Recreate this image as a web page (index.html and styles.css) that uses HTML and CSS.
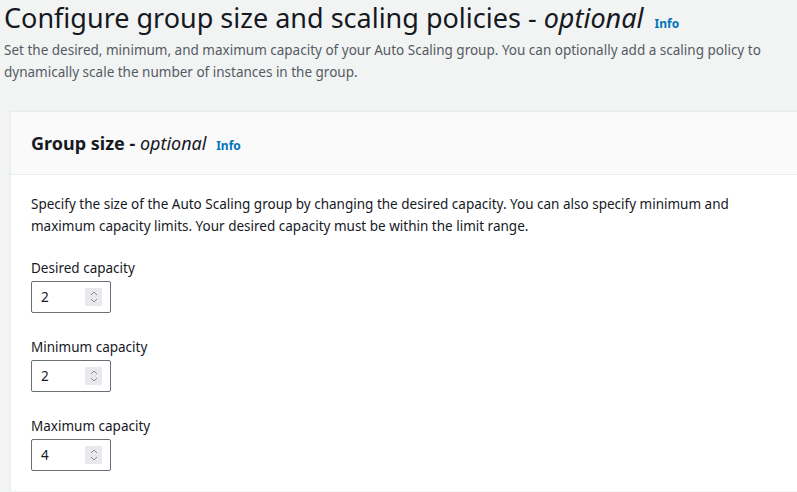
FILE: index.html
```html
<!DOCTYPE html>
<html lang="en">
<head>
    <meta charset="UTF-8">
    <meta name="viewport" content="width=device-width, initial-scale=1.0">
    <title>Configure group size and scaling policies</title>
    <link rel="stylesheet" href="styles.css">
</head>
<body>
    <div class="page">
        <h1 class="page-title">Configure group size and scaling policies - <i>optional</i> <a href="javascript:;" class="info">Info</a></h1>
        <p class="page-desc">Set the desired, minimum, and maximum capacity of your Auto Scaling group. You can optionally add a scaling policy to dynamically scale the number of instances in the group.</p>

        <div class="card">
            <div class="card-header">
                <h2 class="card-title">Group size - <i>optional</i> <a href="javascript:;" class="info">Info</a></h2>
            </div>
            <div class="card-body">
                <p class="card-desc">Specify the size of the Auto Scaling group by changing the desired capacity. You can also specify minimum and maximum capacity limits. Your desired capacity must be within the limit range.</p>

                <div class="field">
                    <label class="field-label">Desired capacity</label>
                    <div class="num-input">
                        <span class="num-value">2</span>
                        <span class="spinner">
                            <svg width="10" height="14" viewBox="0 0 10 14"><path d="M2 5 L5 2 L8 5 M2 9 L5 12 L8 9" fill="none" stroke="#8a8a92" stroke-width="1"/></svg>
                        </span>
                    </div>
                </div>

                <div class="field">
                    <label class="field-label">Minimum capacity</label>
                    <div class="num-input">
                        <span class="num-value">2</span>
                        <span class="spinner">
                            <svg width="10" height="14" viewBox="0 0 10 14"><path d="M2 5 L5 2 L8 5 M2 9 L5 12 L8 9" fill="none" stroke="#8a8a92" stroke-width="1"/></svg>
                        </span>
                    </div>
                </div>

                <div class="field">
                    <label class="field-label">Maximum capacity</label>
                    <div class="num-input">
                        <span class="num-value">4</span>
                        <span class="spinner">
                            <svg width="10" height="14" viewBox="0 0 10 14"><path d="M2 5 L5 2 L8 5 M2 9 L5 12 L8 9" fill="none" stroke="#8a8a92" stroke-width="1"/></svg>
                        </span>
                    </div>
                </div>
            </div>
        </div>
    </div>
</body>
</html>
```

FILE: styles.css
```css
*{margin: 0; padding: 0; box-sizing: border-box;}
body{background: #f2f3f3; font-family: "Noto Sans", "Open Sans", sans-serif; color: #16191f; font-size: 13.5px; line-height: 22px;}
.page{padding: 0 0 0 4px;}
.page-title{font-size: 27px; line-height: 36px; font-weight: 400; color: #16191f;}
.page-title i, .card-title i{font-weight: 400;}
.info{color: #0073bb; font-size: 12px; line-height: 1; font-weight: 700; text-decoration: none; margin-left: 4px; font-style: normal;}
.page-desc{color: #545b64; font-size: 13.5px; line-height: 22px; margin-top: 3px;}

.card{margin: 28px 0 0 6px; background: #fff; border-top: 1px solid #eaeded; border-left: 1px solid #eaeded; box-shadow: 1px 1px 1px 0 rgba(0, 28, 36, 0.3), 1px 1px 1px 1px rgba(0, 28, 36, 0.1);}
.card-header{background: #fafafa; border-bottom: 1px solid #eaeded; padding: 20px 20px;}
.card-title{font-size: 18px; line-height: 22px; font-weight: 700;}
.card-title .info{margin-left: 5px;}
.card-body{padding: 18px 20px 20px;}
.card-desc{margin-bottom: 20px;}

.field + .field{margin-top: 23px;}
.field-label{display: block; margin-bottom: 2px;}
.num-input{width: 80px; height: 32px; border: 1px solid #687078; border-radius: 2px; display: flex; align-items: center; justify-content: space-between; padding: 0 8px 0 9px; background: #fff;}
.spinner{width: 17px; height: 18px; background: #e9e9ed; display: flex; align-items: center; justify-content: center; border-radius: 1px;}
.spinner svg{display: block;}
```
